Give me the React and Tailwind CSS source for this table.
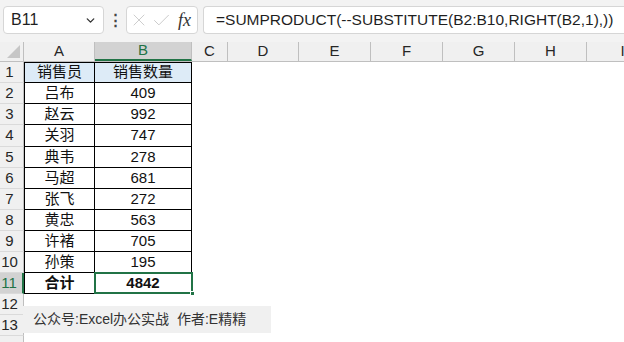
import { ChevronDown, X, Check } from 'lucide-react';

const rows = [
  ['吕布', 409],
  ['赵云', 992],
  ['关羽', 747],
  ['典韦', 278],
  ['马超', 681],
  ['张飞', 272],
  ['黄忠', 563],
  ['许褚', 705],
  ['孙策', 195],
];

const cols = [
  { id: 'A', w: 'w-[71px]' },
  { id: 'B', w: 'w-[97px]' },
  { id: 'C', w: 'w-[36px]' },
  { id: 'D', w: 'w-[71px]' },
  { id: 'E', w: 'w-[72px]' },
  { id: 'F', w: 'w-[72px]' },
  { id: 'G', w: 'w-[72px]' },
  { id: 'H', w: 'w-[72px]' },
  { id: 'I', w: 'w-[72px]' },
];

const font = { fontFamily: '"Liberation Sans", "Noto Sans CJK SC", sans-serif' };

function RowHead({ n, active }) {
  return (
    <div
      className={
        'w-[24px] shrink-0 flex items-center justify-center pr-[4px] text-[15px] border-b border-[#dadada] ' +
        (active
          ? 'bg-[#d2d2d2] text-[#217346] border-r-2 border-r-[#217346]'
          : 'bg-[#f0f0f0] text-[#262626] border-r border-r-[#bfbfbf]')
      }
    >
      {n}
    </div>
  );
}

function Row({ n, children, active, tall }) {
  return (
    <div className={'flex ' + (tall ? 'h-[22px]' : 'h-[21px]')}>
      <RowHead n={n} active={active} />
      {children}
    </div>
  );
}

export default function App() {
  return (
    <div className="w-[624px] h-[342px] overflow-hidden bg-white relative" style={font}>
      {/* name box + formula bar */}
      <div className="h-[42px] bg-[#f3f3f3] flex items-start pt-[6px] pl-[3px] pr-0 gap-0">
        <div className="w-[101px] h-[28px] bg-white border border-[#d6d6d6] rounded-[4px] flex items-center pl-[7px] pr-[6px] text-[16px] text-[#1f1f1f]">
          <span className="flex-1">B11</span>
          <ChevronDown size={13} strokeWidth={2.5} className="text-[#333]" />
        </div>
        <div className="w-[22px] h-[28px] flex items-center justify-center text-[#444] text-[15px] font-bold">⋮</div>
        <div className="w-[72px] h-[28px] bg-white border border-[#d6d6d6] rounded-[4px] flex items-center pl-[2px] gap-[2px]">
          <X size={20} strokeWidth={1} className="text-[#c4c4c4]" />
          <Check size={21} strokeWidth={1} className="text-[#c4c4c4]" />
          <span className="text-[18px] italic text-[#333] ml-[4px]" style={{ fontFamily: '"Liberation Serif", serif' }}>
            fx
          </span>
        </div>
        <div className="ml-[5px] flex-1 h-[28px] bg-white border border-[#d6d6d6] border-r-0 rounded-l-[4px] flex items-center pl-[12px] text-[15.5px] text-[#1f1f1f] whitespace-nowrap">
          =SUMPRODUCT(--SUBSTITUTE(B2:B10,RIGHT(B2,1),))
        </div>
      </div>

      {/* column headers */}
      <div className="flex h-[20px] bg-[#f0f0f0] border-b border-[#bfbfbf]">
        <div className="w-[24px] shrink-0 border-r border-[#bfbfbf] flex items-end justify-end pr-[3px] pb-[3px]">
          <svg width="13" height="13" viewBox="0 0 13 13">
            <polygon points="13,0 13,13 0,13" fill="#c6c6c6" />
          </svg>
        </div>
        {cols.map((c) => (
          <div
            key={c.id}
            className={
              c.w +
              ' shrink-0 flex items-center justify-center text-[15px] border-r ' +
              (c.id === 'B'
                ? 'bg-[#d2d2d2] text-[#217346] border-[#bfbfbf] border-b-2 border-b-[#217346]'
                : 'text-[#262626] border-[#bfbfbf]')
            }
          >
            {c.id}
          </div>
        ))}
      </div>

      {/* data */}
      <div className="text-[15px] text-[#111]">
        <Row n={1}>
          <div className="w-[71px] shrink-0 bg-[#ddebf7] border border-black flex items-center justify-center">销售员</div>
          <div className="w-[97px] shrink-0 bg-[#ddebf7] border border-l-0 border-black flex items-center justify-center">销售数量</div>
        </Row>
        {rows.map(([name, qty], i) => (
          <Row key={name} n={i + 2} tall={i === 2}>
            <div className="w-[71px] shrink-0 border-x border-b border-black flex items-center justify-center">{name}</div>
            <div className="w-[97px] shrink-0 border-r border-b border-black flex items-center justify-center">{qty}</div>
          </Row>
        ))}
        <Row n={11} active>
          <div className="w-[71px] shrink-0 border-x border-b border-black flex items-center justify-center font-bold">合计</div>
          <div className="w-[97px] shrink-0 border-r border-b border-black flex items-center justify-center font-bold relative">
            4842
            <div className="absolute -left-[1px] -top-[1px] -right-[2px] -bottom-[1px] border-2 border-[#217346]" />
            <div className="absolute -right-[4px] -bottom-[3px] w-[5px] h-[5px] bg-[#217346] border border-white" />
          </div>
        </Row>
        <Row n={12} />
        <Row n={13} />
        <Row n="" />
      </div>

      {/* watermark text box */}
      <div className="absolute left-[23px] top-[306px] w-[248px] h-[27px] bg-[#f0f0f0] flex items-center pl-[10px] text-[14px] text-[#333] whitespace-nowrap">
        公众号:Excel办公实战&nbsp;&nbsp;作者:E精精
      </div>
    </div>
  );
}
